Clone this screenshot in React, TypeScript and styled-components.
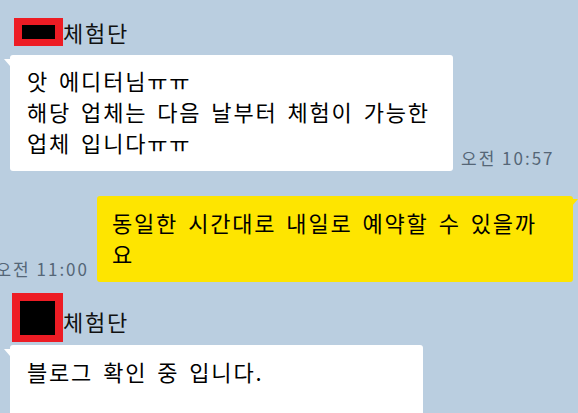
import React from "react";
import styled, { createGlobalStyle } from "styled-components";

const colors = {
  background: "#bacee0",
  other: "#ffffff",
  mine: "#fee500",
  time: "#556677",
  redact: "#ed1c24",
};

const GlobalStyle = createGlobalStyle`
  html, body {
    margin: 0;
    padding: 0;
    background: ${colors.background};
  }
  body {
    font-family: "Noto Sans CJK KR", "Noto Sans", sans-serif;
    color: #000;
  }
`;

const Chat = styled.div`
  width: 578px;
  height: 413px;
  overflow: hidden;
  box-sizing: border-box;
  padding-top: 18px;
  display: flex;
  flex-direction: column;
  background: ${colors.background};
`;

const Sender = styled.div<{ $left: number; $top: number }>`
  display: flex;
  align-items: center;
  margin-left: ${(p) => p.$left}px;
  margin-top: ${(p) => p.$top}px;
`;

const Redact = styled.div<{ $w: number; $h: number; $border: string }>`
  width: ${(p) => p.$w}px;
  height: ${(p) => p.$h}px;
  box-sizing: border-box;
  border: solid ${colors.redact};
  border-width: ${(p) => p.$border};
  background: #000;
  flex-shrink: 0;
`;

const Name = styled.span<{ $shift: number }>`
  font-size: 22px;
  line-height: 28px;
  letter-spacing: 1.7px;
  padding-top: ${(p) => p.$shift}px;
  color: #111;
`;

const Row = styled.div<{ $mine?: boolean; $top: number }>`
  display: flex;
  align-items: flex-end;
  justify-content: ${(p) => (p.$mine ? "flex-end" : "flex-start")};
  gap: 8px;
  margin-top: ${(p) => p.$top}px;
  padding: ${(p) => (p.$mine ? "0 5px 0 0" : "0 0 0 10px")};
`;

const Bubble = styled.div<{ $mine?: boolean; $width: number; $padTop: number }>`
  position: relative;
  flex-shrink: 0;
  width: ${(p) => p.$width}px;
  box-sizing: border-box;
  padding: ${(p) => p.$padTop}px ${(p) => (p.$mine ? 15 : 17)}px 13px;
  background: ${(p) => (p.$mine ? colors.mine : colors.other)};
  border-radius: 3px;
  font-size: 22px;
  line-height: 31px;
  letter-spacing: 1.8px;
  word-spacing: 3.3px;
  white-space: nowrap;

  &::before {
    content: "";
    position: absolute;
    top: ${(p) => (p.$mine ? 3 : 4)}px;
    width: 6px;
    height: 7px;
    background: inherit;
    ${(p) =>
      p.$mine
        ? "right: -5px; clip-path: polygon(0 0, 100% 0, 0 100%);"
        : "left: -6px; clip-path: polygon(0 0, 100% 0, 100% 100%);"}
  }
`;

const Time = styled.span`
  flex-shrink: 0;
  white-space: nowrap;
  font-size: 17px;
  line-height: 20px;
  letter-spacing: 2px;
  color: ${colors.time};
  margin-bottom: 3px;
`;

export default function App() {
  return (
    <>
      <GlobalStyle />
      <Chat>
        <Sender $left={14} $top={0}>
          <Redact $w={49} $h={28} $border="7px 8px" />
          <Name $shift={0}>체험단</Name>
        </Sender>
        <Row $top={9}>
          <Bubble $width={443} $padTop={10}>
            앗 에디터님ㅠㅠ
            <br />
            해당 업체는 다음 날부터 체험이 가능한
            <br />
            업체 입니다ㅠㅠ
          </Bubble>
          <Time>오전 10:57</Time>
        </Row>
        <Row $mine $top={25}>
          <Time>오전 11:00</Time>
          <Bubble $mine $width={476} $padTop={11}>
            동일한 시간대로 내일로 예약할 수 있을까
            <br />요
          </Bubble>
        </Row>
        <Sender $left={12} $top={11}>
          <Redact $w={51} $h={49} $border="8px 8px 7px" />
          <Name $shift={7}>체험단</Name>
        </Sender>
        <Row $top={3}>
          <Bubble $width={413} $padTop={11}>
            블로그 확인 중 입니다.
            <br />
            <br />
          </Bubble>
        </Row>
      </Chat>
    </>
  );
}
